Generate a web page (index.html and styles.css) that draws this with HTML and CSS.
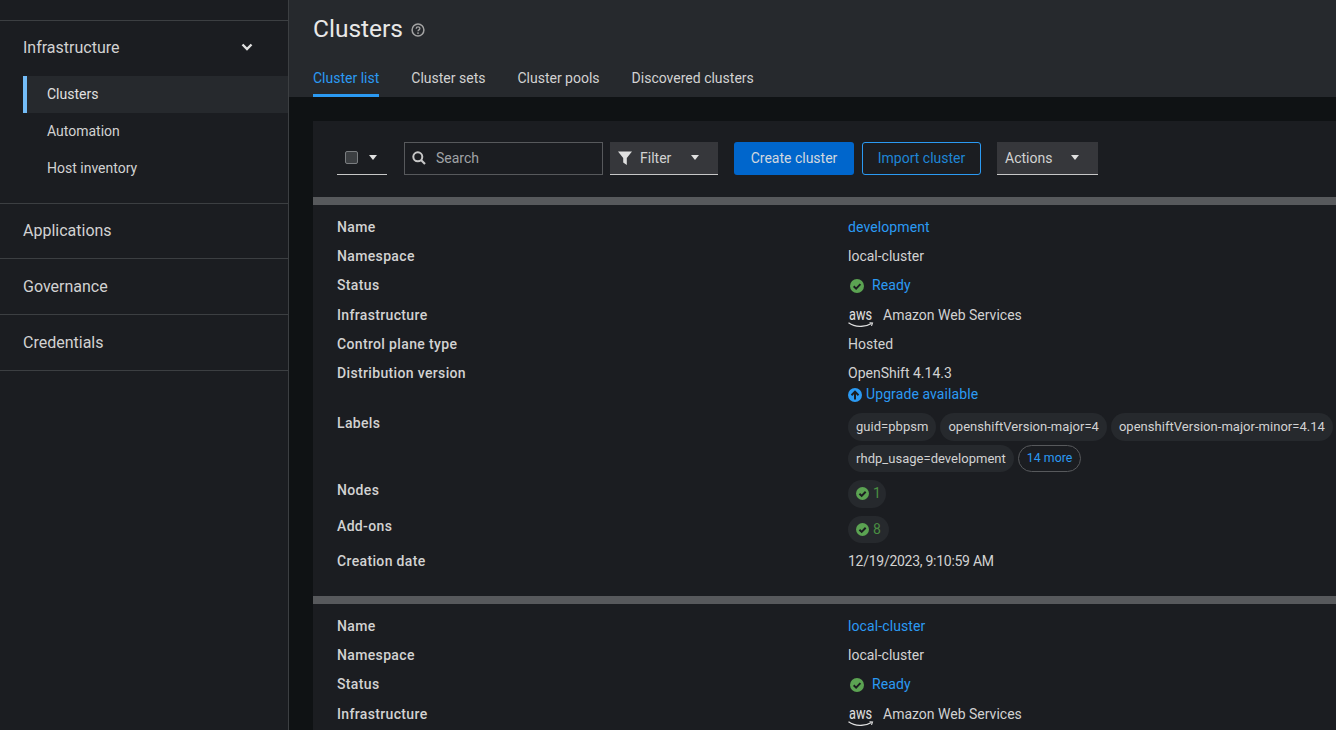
FILE: index.html
```html
<!DOCTYPE html>
<html lang="en">
<head>
    <meta charset="UTF-8">
    <meta name="viewport" content="width=device-width, initial-scale=1.0">
    <title>Clusters</title>
    <link rel="stylesheet" href="styles.css">
</head>
<body>
    <div class="layout">
        <nav class="sidebar">
            <div class="nav-group nav-open">
                <div class="nav-head nav-head-open">
                    Infrastructure
                    <svg class="nav-chevron" width="12" height="12" viewBox="0 0 12 12"><path d="M1.500 3.500L6 8l4.500-4.500" fill="none" stroke="#e0e0e0" stroke-width="2.400"/></svg>
                </div>
                <ul class="nav-sub">
                    <li class="nav-item current">Clusters</li>
                    <li class="nav-item">Automation</li>
                    <li class="nav-item">Host inventory</li>
                </ul>
            </div>
            <div class="nav-group"><div class="nav-head">Applications</div></div>
            <div class="nav-group"><div class="nav-head">Governance</div></div>
            <div class="nav-group"><div class="nav-head">Credentials</div></div>
        </nav>

        <main class="main">
            <header class="page-header">
                <div class="title-row">
                    <h1>Clusters</h1>
                    <svg class="help-icon" width="14" height="14" viewBox="0 0 14 14">
                        <circle cx="7" cy="7" r="5.900" fill="none" stroke="#a3a3a3" stroke-width="1.500"/>
                        <path d="M5.200 5.700c0-2.300 3.700-2.300 3.700-0.100 0 1.300-1.900 1.300-1.900 2.700" fill="none" stroke="#a3a3a3" stroke-width="1.300"/>
                        <circle cx="7" cy="10.100" r="0.900" fill="#a3a3a3"/>
                    </svg>
                </div>
                <div class="tabs">
                    <a class="tab active">Cluster list</a>
                    <a class="tab">Cluster sets</a>
                    <a class="tab">Cluster pools</a>
                    <a class="tab">Discovered clusters</a>
                </div>
            </header>

            <section class="content">
                <div class="panel">
                    <div class="toolbar">
                        <div class="bulk-select">
                            <span class="checkbox"></span>
                            <span class="caret"></span>
                        </div>
                        <div class="search">
                            <svg width="14" height="14" viewBox="0 0 14 14"><circle cx="5.800" cy="5.800" r="4.500" fill="none" stroke="#c7c7c7" stroke-width="2"/><path d="M9 9l4 4" stroke="#c7c7c7" stroke-width="2.200"/></svg>
                            <span>Search</span>
                        </div>
                        <div class="dropdown filter">
                            <svg width="14" height="14" viewBox="0 0 14 14"><path d="M0 0.500h14L8.800 7v7L5.200 11.500V7z" fill="#e0e0e0"/></svg>
                            <span>Filter</span>
                            <span class="caret"></span>
                        </div>
                        <button class="btn btn-primary">Create cluster</button>
                        <button class="btn btn-secondary">Import cluster</button>
                        <div class="dropdown actions">
                            <span>Actions</span>
                            <span class="caret"></span>
                        </div>
                    </div>

                    <dl class="cluster">
                        <dt>Name</dt>
                        <dd><a class="link">development</a></dd>
                        <dt>Namespace</dt>
                        <dd>local-cluster</dd>
                        <dt>Status</dt>
                        <dd class="with-icon"><svg width="14" height="14" viewBox="0 0 16 16"><circle cx="8" cy="8" r="8" fill="#5ba352"/><path d="M4.200 8.300l2.800 2.700 4.900-5.100" fill="none" stroke="#1b1d21" stroke-width="2.200"/></svg><a class="link">Ready</a></dd>
                        <dt class="row-logo">Infrastructure</dt>
                        <dd class="with-logo"><svg width="32" height="24" viewBox="0 0 32 24"><text x="1" y="17" class="aws-text" textLength="23" lengthAdjust="spacingAndGlyphs">aws</text><path d="M0.500 19.700c6.500 4.600 16 5 23 0.800" fill="none" stroke="#e0e0e0" stroke-width="1.200"/><path d="M21.500 19.800l3 0.200-1 2.900" fill="none" stroke="#e0e0e0" stroke-width="1.100"/></svg>Amazon Web Services</dd>
                        <dt>Control plane type</dt>
                        <dd>Hosted</dd>
                        <dt>Distribution version</dt>
                        <dd>
                            OpenShift 4.14.3
                            <div class="upgrade">
                                <svg width="14" height="14" viewBox="0 0 14 14"><circle cx="7" cy="7" r="7" fill="#2b9af3"/><path d="M7 11.500V4M3.500 7.200L7 3.600l3.500 3.600" fill="none" stroke="#1b1d21" stroke-width="2"/></svg>
                                <a class="link">Upgrade available</a>
                            </div>
                        </dd>
                        <dt>Labels</dt>
                        <dd class="chips">
                            <span class="chip">guid=pbpsm</span>
                            <span class="chip">openshiftVersion-major=4</span>
                            <span class="chip">openshiftVersion-major-minor=4.14</span>
                            <span class="chip">rhdp_usage=development</span>
                            <span class="chip chip-more">14 more</span>
                        </dd>
                        <dt>Nodes</dt>
                        <dd><span class="chip chip-count chip-one"><svg width="13" height="13" viewBox="0 0 16 16"><circle cx="8" cy="8" r="8" fill="#5ba352"/><path d="M4.200 8.300l2.800 2.700 4.900-5.100" fill="none" stroke="#1b1d21" stroke-width="2.400"/></svg>1</span></dd>
                        <dt>Add-ons</dt>
                        <dd><span class="chip chip-count"><svg width="13" height="13" viewBox="0 0 16 16"><circle cx="8" cy="8" r="8" fill="#5ba352"/><path d="M4.200 8.300l2.800 2.700 4.900-5.100" fill="none" stroke="#1b1d21" stroke-width="2.400"/></svg>8</span></dd>
                        <dt>Creation date</dt>
                        <dd class="date">12/19/2023, 9:10:59 AM</dd>
                    </dl>

                    <dl class="cluster">
                        <dt>Name</dt>
                        <dd><a class="link">local-cluster</a></dd>
                        <dt>Namespace</dt>
                        <dd>local-cluster</dd>
                        <dt>Status</dt>
                        <dd class="with-icon"><svg width="14" height="14" viewBox="0 0 16 16"><circle cx="8" cy="8" r="8" fill="#5ba352"/><path d="M4.200 8.300l2.800 2.700 4.900-5.100" fill="none" stroke="#1b1d21" stroke-width="2.200"/></svg><a class="link">Ready</a></dd>
                        <dt class="row-logo">Infrastructure</dt>
                        <dd class="with-logo"><svg width="32" height="24" viewBox="0 0 32 24"><text x="1" y="17" class="aws-text" textLength="23" lengthAdjust="spacingAndGlyphs">aws</text><path d="M0.500 19.700c6.500 4.600 16 5 23 0.800" fill="none" stroke="#e0e0e0" stroke-width="1.200"/><path d="M21.500 19.800l3 0.200-1 2.900" fill="none" stroke="#e0e0e0" stroke-width="1.100"/></svg>Amazon Web Services</dd>
                    </dl>
                </div>
            </section>
        </main>
    </div>
</body>
</html>
```

FILE: styles.css
```css
/* Global styles */
html, body {
    height: 100%;
    margin: 0;
    overflow: hidden;
}
body {
    font-family: Roboto, "Noto Sans", sans-serif;
    font-size: 14px;
    color: #e0e0e0;
    background-color: #0f1214;
}
.aws-text {
    font-family: Roboto, sans-serif;
    font-size: 16px;
    fill: #e0e0e0;
}
.layout {
    display: flex;
    height: 730px;
}

/* Sidebar */
.sidebar {
    width: 288px;
    flex: none;
    padding-top: 20px;
    background-color: #1b1d21;
    border-right: 1px solid #3c3f42;
}
.nav-group {
    border-top: 1px solid #3c3f42;
}
.nav-group:last-child {
    border-bottom: 1px solid #3c3f42;
}
.nav-head {
    display: flex;
    justify-content: space-between;
    align-items: center;
    box-sizing: border-box;
    height: 54.670px;
    padding: 0 35px 0 23px;
    font-size: 16px;
    color: #d2d2d2;
}
.nav-head-open {
    padding-bottom: 2px;
}
.nav-sub {
    list-style: none;
    margin: 0 0 0 23px;
    padding: 0 0 16px;
}
.nav-item {
    height: 37px;
    line-height: 37px;
    padding-left: 24px;
    font-size: 14px;
    color: #d2d2d2;
}
.nav-item.current {
    padding-left: 20px;
    border-left: 4px solid #73bcf7;
    background-color: #26292d;
    color: #e0e0e0;
}

/* Page header */
.main {
    flex: 1;
    min-width: 0;
}
.page-header {
    height: 97px;
    padding: 0 24px;
    background-color: #26292d;
}
.title-row {
    display: flex;
    align-items: center;
    gap: 8px;
    height: 57px;
}
h1 {
    margin: 0;
    font-size: 24.500px;
    font-weight: 400;
    color: #e8e8e8;
}
.help-icon {
    margin-top: 3px;
}
.tabs {
    display: flex;
    gap: 32px;
}
.tab {
    height: 40px;
    line-height: 43px;
    font-size: 14px;
    color: #d2d2d2;
}
.tab.active {
    height: 37px;
    color: #2b9af3;
    border-bottom: 3px solid #2b9af3;
}

/* Content panel */
.content {
    padding: 24px 0 0 24px;
}
.panel {
    background-color: #1b1d21;
}
.toolbar {
    display: flex;
    align-items: center;
    box-sizing: border-box;
    height: 76px;
    padding: 0 0 2px 24px;
}
.bulk-select {
    display: flex;
    align-items: center;
    gap: 11px;
    width: 50px;
    height: 33px;
    padding-left: 8px;
    box-sizing: border-box;
    border-bottom: 1px solid #c7c7c7;
    margin-right: 17px;
}
.checkbox {
    width: 11px;
    height: 11px;
    background-color: #3c3f42;
    border: 1px solid #7a7d80;
    border-radius: 2px;
}
.caret {
    width: 0;
    height: 0;
    border-left: 4.500px solid transparent;
    border-right: 4.500px solid transparent;
    border-top: 5px solid #e0e0e0;
}
.search {
    display: flex;
    align-items: center;
    gap: 10px;
    width: 199px;
    height: 33px;
    padding-left: 7px;
    box-sizing: border-box;
    border: 1px solid #57595c;
    color: #a0a3a6;
    margin-right: 7px;
}
.dropdown {
    display: flex;
    align-items: center;
    height: 33px;
    box-sizing: border-box;
    background-color: #36373b;
    border-bottom: 1px solid #c7c7c7;
    color: #d2d2d2;
}
.filter {
    width: 108px;
    padding: 0 19px 0 8px;
    gap: 8px;
    margin-right: 16px;
}
.filter .caret {
    margin-left: auto;
}
.actions {
    width: 101px;
    padding: 0 19px 0 8px;
    justify-content: space-between;
}
.btn {
    height: 33px;
    font-family: inherit;
    font-size: 14px;
    border-radius: 3px;
    padding: 0;
    margin-right: 8px;
}
.btn-primary {
    width: 120px;
    background-color: #0066cc;
    border: none;
    color: #d2d8df;
}
.btn-secondary {
    width: 119px;
    margin-right: 16px;
    background: none;
    border: 1px solid #2b9af3;
    color: #1f86d6;
}

/* Cluster rows */
.cluster {
    display: grid;
    grid-template-columns: 511px 1fr;
    row-gap: 8px;
    margin: 0;
    padding: 12px 0 24px 24px;
    border-top: 8px solid #57595c;
    line-height: 21px;
}
.cluster dt {
    font-weight: 500;
    letter-spacing: 0.350px;
    color: #d2d2d2;
}
.cluster dt.row-logo {
    align-self: center;
}
.cluster dd {
    margin: 0;
    color: #d2d2d2;
}
.cluster dd.date {
    letter-spacing: -0.270px;
}
.link {
    color: #2b9af3;
    letter-spacing: 0.100px;
}
.with-icon {
    display: flex;
    align-items: center;
    gap: 8px;
    padding-left: 2px;
}
.with-logo {
    display: flex;
    align-items: center;
    gap: 3px;
    height: 22px;
}
.upgrade {
    display: flex;
    align-items: center;
    gap: 4px;
}
.chips {
    display: flex;
    flex-wrap: wrap;
    gap: 4px;
    max-width: 487px;
}
.chip {
    display: inline-flex;
    align-items: center;
    height: 27.500px;
    padding: 0 8px;
    border-radius: 14px;
    background-color: #26292d;
    font-size: 13px;
    letter-spacing: 0.030px;
    white-space: nowrap;
    color: #d2d2d2;
}
.chip-more {
    background: none;
    border: 1px solid #57595c;
    font-size: 12.300px;
    color: #2b9af3;
    box-sizing: border-box;
}
.chip-count {
    gap: 4px;
    font-size: 14px;
    color: #4a8f42;
}
.chip-one {
    letter-spacing: -3.500px;
    padding-right: 9px;
}
```
